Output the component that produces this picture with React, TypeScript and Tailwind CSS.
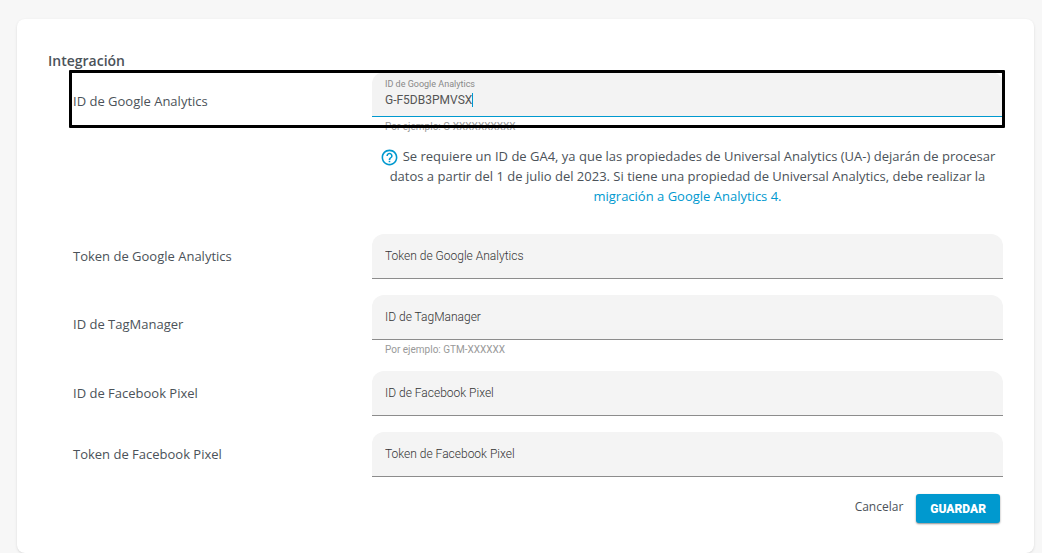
import React, { useState } from "react";

type FieldProps = {
    id: string;
    label: string;
    hint?: string;
};

const Field: React.FC<FieldProps> = ({ id, label, hint }) => {
    return (
        <div className="flex items-center">
            <label htmlFor={id} className="w-[299px] shrink-0 pb-0.5 text-[13px] leading-5">{label}</label>
            <div className="flex-1">
                <input
                    id={id}
                    type="text"
                    placeholder={label}
                    className="block h-[45px] w-full rounded-t-xl border-b border-[#8c8c8c] bg-[#f4f4f4] px-[13px] font-['Roboto',sans-serif] text-[12px] font-light text-[#333] outline-none placeholder:text-[#333]"
                />
                {hint && <Hint text={hint} />}
            </div>
        </div>
    );
};

const Hint = ({ text }: { text: string }) => (
    <p className="h-[15px] px-[13px] pt-1 font-['Roboto',sans-serif] text-[10px] leading-3 text-[#999]">{text}</p>
);

const AnalyticsField = () => {
    const [value, setValue] = useState("G-F5DB3PMVSX");

    return (
        <div className="relative flex items-center">
            <label htmlFor="ga-id" className="w-[299px] shrink-0 pb-0.5 text-[13px] leading-5">
                ID de Google Analytics
            </label>
            <div className="flex-1">
                <div className="flex h-[45px] flex-col rounded-t-xl border-b border-[#0099cf] bg-[#f3f3f3] px-[13px] pt-1.5 font-['Roboto',sans-serif]">
                    <span className="text-[9px] leading-3 text-[#888]">ID de Google Analytics</span>
                    <div className="flex items-center pt-0.5">
                        <input
                            id="ga-id"
                            type="text"
                            value={value}
                            onChange={(e) => setValue(e.target.value)}
                            className="field-sizing-content h-4 text-[12px] leading-4 text-[#555] caret-transparent outline-none"
                        />
                        <span className="h-3.5 w-px bg-[#0099cf]"></span>
                    </div>
                </div>
                <Hint text="Por ejemplo: G-XXXXXXXXXX" />
            </div>
            {/* highlight frame around the row */}
            <div className="pointer-events-none absolute -top-0.5 -right-0.5 bottom-1 -left-1 rounded-[1px] border-3 border-black"></div>
        </div>
    );
};

const HelpIcon = () => (
    <svg viewBox="0 0 24 24" className="mr-1 -my-1 inline-block size-[19px] align-middle" fill="#0099cf" aria-hidden="true">
        <path d="M11 18h2v-2h-2v2zm1-16C6.48 2 2 6.48 2 12s4.48 10 10 10 10-4.480 10-10S17.520 2 12 2zm0 18c-4.410 0-8-3.590-8-8s3.590-8 8-8 8 3.590 8 8-3.590 8-8 8zm0-14c-2.210 0-4 1.790-4 4h2c0-1.100.900-2 2-2s2 .900 2 2c0 2-3 1.750-3 5h2c0-2.250 3-2.500 3-5 0-2.210-1.790-4-4-4z" />
    </svg>
);

export default function App() {
    return (
        <main className="min-h-screen bg-[#f7f7f7] pt-[19px] pr-2 pl-[17px] font-['Open_Sans',sans-serif] text-[#4b5259]">
            <form
                className="rounded-lg bg-white pt-8 pr-[31px] pb-[30px] pl-[31px] shadow"
                onSubmit={(e) => e.preventDefault()}
            >
                <h2 className="h-[21px] text-[14px] leading-5 font-semibold">Integración</h2>

                <div className="pl-[25px]">
                    <AnalyticsField />

                    <div className="mt-3.5 mb-7 pl-[299px]">
                        <p className="text-center text-[13px] leading-5">
                            <HelpIcon />
                            Se requiere un ID de GA4, ya que las propiedades de Universal Analytics (UA-) dejarán de procesar
                            datos a partir del 1 de julio del 2023. Si tiene una propiedad de Universal Analytics, debe realizar la{" "}
                            <a href="#migracion" className="text-[#0099cf]">migración a Google Analytics 4.</a>
                        </p>
                    </div>

                    <div className="flex flex-col gap-4">
                        <Field id="ga-token" label="Token de Google Analytics" />
                        <Field id="gtm-id" label="ID de TagManager" hint="Por ejemplo: GTM-XXXXXX" />
                        <Field id="fb-id" label="ID de Facebook Pixel" />
                        <Field id="fb-token" label="Token de Facebook Pixel" />
                    </div>
                </div>

                <div className="mt-[17px] flex items-center justify-end gap-[13px] pr-[3px]">
                    <button type="button" className="pb-1 text-[12px] leading-5">Cancelar</button>
                    <button
                        type="submit"
                        className="h-[29px] rounded-[3px] bg-[#0099cf] px-3.5 font-['Roboto',sans-serif] text-[12px] font-black text-white shadow-[0_1px_2px_rgba(0,0,0,0.45)]"
                    >
                        GUARDAR
                    </button>
                </div>
            </form>
        </main>
    );
}
